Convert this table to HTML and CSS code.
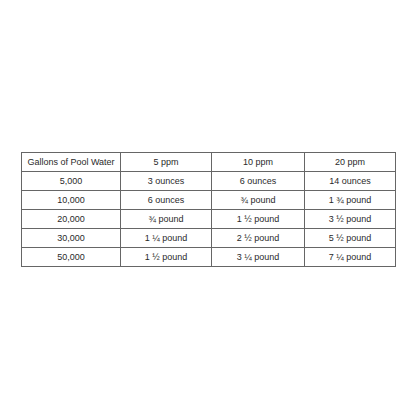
FILE: index.html
```html
<!DOCTYPE html>
<html>
<head>
<meta charset="utf-8">
<link rel="stylesheet" href="styles.css">
</head>
<body>
<div class="page">
<table class="dose">
<colgroup><col class="c1"><col class="c2"><col class="c3"><col class="c4"></colgroup>
<tr><td>Gallons of Pool Water</td><td>5 ppm</td><td>10 ppm</td><td>20 ppm</td></tr>
<tr><td>5,000</td><td>3 ounces</td><td>6 ounces</td><td>14 ounces</td></tr>
<tr><td>10,000</td><td>6 ounces</td><td>¾ pound</td><td>1 ¾ pound</td></tr>
<tr><td>20,000</td><td>¾ pound</td><td>1 ½ pound</td><td>3 ½ pound</td></tr>
<tr><td>30,000</td><td>1 ¼ pound</td><td>2 ½ pound</td><td>5 ½ pound</td></tr>
<tr><td>50,000</td><td>1 ½ pound</td><td>3 ¼ pound</td><td>7 ¼ pound</td></tr>
</table>
</div>
</body>
</html>
```
FILE: styles.css
```css
html, body { margin: 0; padding: 0; background: #fff; }
.page {
  width: 416px;
  height: 416px;
  display: flex;
  align-items: center;
  justify-content: center;
}
.dose {
  border-collapse: collapse;
  table-layout: fixed;
  width: 375px;
  font-family: "Liberation Sans", Arial, sans-serif;
  font-size: 9px;
  color: #2a2a2a;
  margin: 2px 0 0 1px;
}
.c1 { width: 99px; }
.c2 { width: 91px; }
.c3 { width: 93px; }
.c4 { width: 91px; }
.dose td {
  border: 1px solid #666;
  height: 18px;
  padding: 0;
  text-align: center;
  vertical-align: middle;
  line-height: 18px;
}
```
